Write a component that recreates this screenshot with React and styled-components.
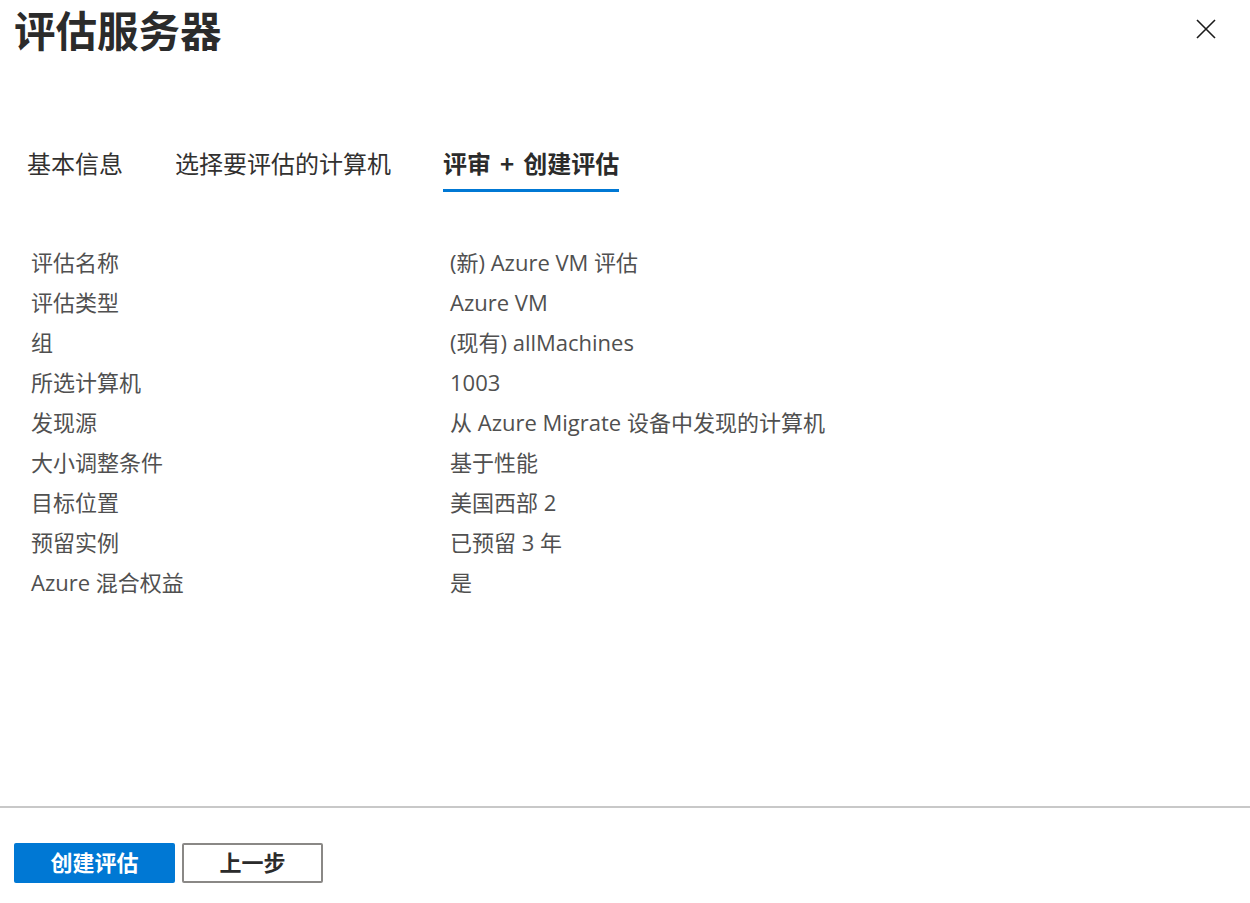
import styled, { createGlobalStyle } from 'styled-components';

const GlobalStyle = createGlobalStyle`
  html, body {
    margin: 0;
    padding: 0;
    background: #ffffff;
  }
  body {
    font-family: 'Open Sans', 'Noto Sans CJK SC', sans-serif;
    color: #323130;
  }
`;

const Panel = styled.div`
  height: 100vh;
  display: flex;
  flex-direction: column;
  box-sizing: border-box;
`;

const Header = styled.div`
  display: flex;
  justify-content: space-between;
  align-items: flex-start;
  padding: 5px 20px 0 14px;
`;

const Title = styled.h1`
  margin: 0;
  font-family: 'Noto Sans CJK SC', sans-serif;
  font-size: 41.5px;
  line-height: 48px;
  font-weight: 700;
  color: #2b2b2b;
`;

const CloseButton = styled.button`
  margin-top: 12px;
  margin-right: 12px;
  width: 24px;
  height: 24px;
  padding: 0;
  border: none;
  background: transparent;
  cursor: pointer;
  display: flex;
  align-items: center;
  justify-content: center;
`;

const Tabs = styled.div`
  display: flex;
  gap: 52px;
  margin-top: 94px;
  padding-left: 27px;
`;

const Tab = styled.div`
  font-family: 'Noto Sans CJK SC', sans-serif;
  font-size: 24px;
  line-height: 32px;
  padding-bottom: 10px;
  border-bottom: 3px solid ${(p) => (p.$active ? '#0078d4' : 'transparent')};
  font-weight: ${(p) => (p.$active ? 700 : 400)};
  color: ${(p) => (p.$active ? '#2b2b2b' : '#323130')};
  white-space: nowrap;
`;

const Plus = styled.span`
  margin: 0 9px;
`;

const Summary = styled.div`
  flex: 1;
  display: grid;
  grid-template-columns: 419px 1fr;
  grid-auto-rows: 40px;
  align-content: start;
  margin-top: 50px;
  padding-left: 31px;
`;

const Cell = styled.div`
  font-family: 'Open Sans', 'Noto Sans CJK SC', sans-serif;
  font-size: 22px;
  line-height: 40px;
  color: #505050;
  white-space: nowrap;
`;

const Footer = styled.div`
  border-top: 2px solid #c8c8c8;
  padding: 35px 14px 20px;
  display: flex;
  gap: 7px;
`;

const Button = styled.button`
  box-sizing: border-box;
  height: 40px;
  width: ${(p) => p.$width}px;
  border-radius: 2px;
  padding: 0 0 4px;
  font-family: 'Noto Sans CJK SC', sans-serif;
  font-size: 22px;
  line-height: 32px;
  font-weight: 700;
  cursor: pointer;
  background: ${(p) => (p.$primary ? '#0078d4' : '#ffffff')};
  color: ${(p) => (p.$primary ? '#ffffff' : '#2b2b2b')};
  border: ${(p) => (p.$primary ? 'none' : '2px solid #8a8886')};
`;

const rows = [
  ['评估名称', '(新) Azure VM 评估'],
  ['评估类型', 'Azure VM'],
  ['组', '(现有) allMachines'],
  ['所选计算机', '1003'],
  ['发现源', '从 Azure Migrate 设备中发现的计算机'],
  ['大小调整条件', '基于性能'],
  ['目标位置', '美国西部 2'],
  ['预留实例', '已预留 3 年'],
  ['Azure 混合权益', '是'],
];

const App = () => {
  return (
    <>
      <GlobalStyle />
      <Panel>
        <Header>
          <Title>评估服务器</Title>
          <CloseButton aria-label='关闭'>
            <svg width='22' height='22' viewBox='0 0 22 22'>
              <path d='M2 2 L20 20 M20 2 L2 20' stroke='#1b1b1b' strokeWidth='1.6' fill='none' />
            </svg>
          </CloseButton>
        </Header>
        <Tabs>
          <Tab>基本信息</Tab>
          <Tab>选择要评估的计算机</Tab>
          <Tab $active>
            评审<Plus>+</Plus>创建评估
          </Tab>
        </Tabs>
        <Summary>
          {rows.flatMap(([label, value]) => [
            <Cell key={label}>{label}</Cell>,
            <Cell key={label + '-v'}>{value}</Cell>,
          ])}
        </Summary>
        <Footer>
          <Button $primary $width={161}>创建评估</Button>
          <Button $width={141}>上一步</Button>
        </Footer>
      </Panel>
    </>
  );
};

export default App;
